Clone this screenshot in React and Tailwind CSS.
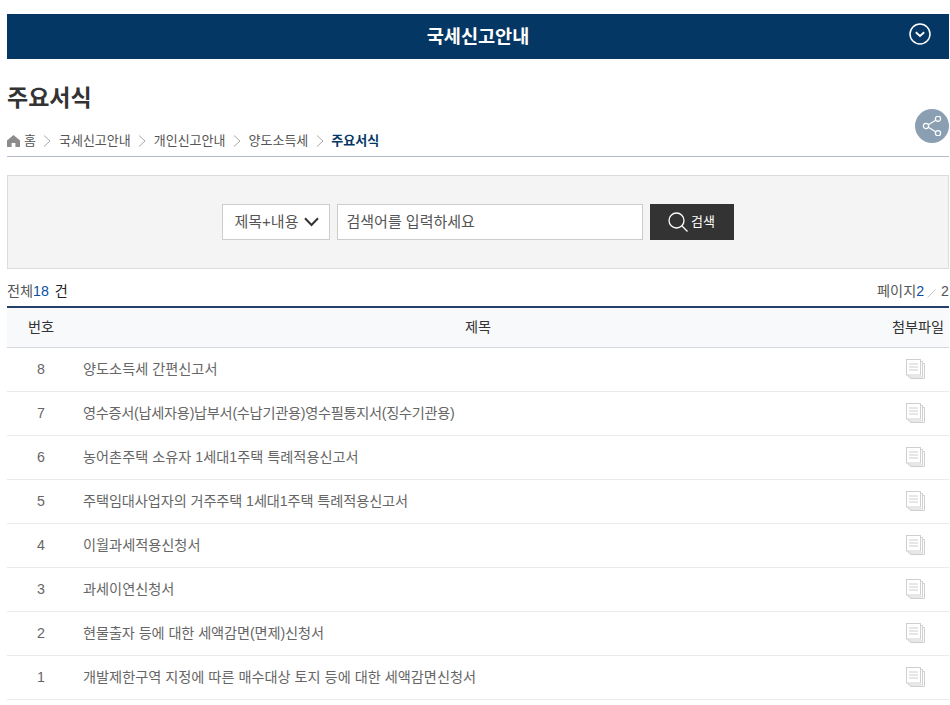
import React from 'react';

const rows = [
  { no: 8, title: '양도소득세 간편신고서' },
  { no: 7, title: '영수증서(납세자용)납부서(수납기관용)영수필통지서(징수기관용)', tight: 'tracking-[-0.28px]' },
  { no: 6, title: '농어촌주택 소유자 1세대1주택 특례적용신고서' },
  { no: 5, title: '주택임대사업자의 거주주택 1세대1주택 특례적용신고서', tight: 'tracking-[-0.1px]' },
  { no: 4, title: '이월과세적용신청서' },
  { no: 3, title: '과세이연신청서' },
  { no: 2, title: '현물출자 등에 대한 세액감면(면제)신청서', tight: 'tracking-[-0.1px]' },
  { no: 1, title: '개발제한구역 지정에 따른 매수대상 토지 등에 대한 세액감면신청서' },
];

const crumbs = ['국세신고안내', '개인신고안내', '양도소득세'];

const Sep = () => (
  <svg width="8" height="12" viewBox="0 0 8 12" fill="none" stroke="#a8a8a8" strokeWidth="1" className="mx-[7.5px] shrink-0">
    <path d="M1 0.5 L7 6 L1 11.5" />
  </svg>
);

const HomeIcon = () => (
  <svg width="13" height="12" viewBox="0 0 13 12" fill="#8c8c8c" className="mr-[4px] shrink-0">
    <path d="M6.5 0 L13 5.6 V12 H8.4 V8 H4.6 V12 H0 V5.6 Z" />
  </svg>
);

const CircleDown = () => (
  <svg width="22" height="22" viewBox="0 0 22 22" fill="none" stroke="#fff">
    <circle cx="11" cy="11" r="10" strokeWidth="1.5" />
    <path d="M6.8 9.3 L11 13 L15.2 9.3" strokeWidth="1.8" />
  </svg>
);

const ShareIcon = () => (
  <svg width="20" height="20" viewBox="0 0 20 20" fill="none" stroke="#fff" strokeWidth="1.2">
    <circle cx="16" cy="2.8" r="2.6" />
    <circle cx="4" cy="10" r="2.6" />
    <circle cx="16" cy="17.2" r="2.6" />
    <path d="M6.3 8.7 L13.7 4.2 M6.3 11.3 L13.7 15.8" />
  </svg>
);

const FileIcon = () => (
  <svg width="19" height="20" viewBox="0 0 19 20" fill="none" stroke="#cfcfcf" strokeWidth="1">
    <path d="M14.5 2.5 H16.5 V18 H2.5 V16" />
    <path d="M16.5 4.5 H18.5 V19.5 H4.5 V18" />
    <rect x="0.5" y="0.5" width="14" height="15.5" fill="#fff" />
    <path d="M3 5 H12 M3 8 H12 M3 11 H12" />
  </svg>
);

const SelectArrow = () => (
  <svg width="15" height="10" viewBox="0 0 15 10" fill="none" stroke="#333" strokeWidth="2">
    <path d="M1 1.2 L7.5 8 L14 1.2" />
  </svg>
);

const SearchIcon = () => (
  <svg width="20" height="20" viewBox="0 0 20 20" fill="none" stroke="#fff" strokeWidth="1.3">
    <circle cx="8.5" cy="8.5" r="7.5" />
    <path d="M14 14 L19.5 19.5" />
  </svg>
);

const Slash = () => (
  <svg width="9" height="10" viewBox="0 0 9 10" fill="none" stroke="#c4c4c4" strokeWidth="1" className="ml-[3px] mr-[5px] mt-[3px]">
    <path d="M0.5 9.5 L8.5 1.5" />
  </svg>
);

const App = () => {
  return (
    <div className="relative min-h-[705px] bg-white pl-[7px] pr-px pt-[14px] text-[14.2px] font-['Liberation_Sans','Noto_Sans_CJK_KR',sans-serif] text-[#666]">
      {/* 상단 타이틀 */}
      <div className="relative flex h-[45px] items-center justify-center bg-[#053764] pt-px">
        <span className="text-[18.6px] font-bold text-white">국세신고안내</span>
        <span className="absolute right-[18px] top-[9px]">
          <CircleDown />
        </span>
      </div>

      <h1 className="mt-[22px] h-[34px] text-[23px] font-bold leading-[34px] text-[#333]">주요서식</h1>

      {/* 경로 */}
      <div className="mt-[15px] flex h-[27px] items-start border-b border-[#b4bac8] pt-[2px] text-[13px] leading-[18px] text-[#555]">
        <div className="flex h-[18px] items-center">
          <HomeIcon />
          <span>홈</span>
          <Sep />
          {crumbs.map((c) => (
            <React.Fragment key={c}>
              <span>{c}</span>
              <Sep />
            </React.Fragment>
          ))}
          <span className="font-bold text-[#053764]">주요서식</span>
        </div>
      </div>

      <button className="absolute right-px top-[109px] flex h-[34px] w-[34px] items-center justify-center rounded-full bg-[#8b9fb3]">
        <ShareIcon />
      </button>

      {/* 검색 */}
      <div className="mt-[18px] flex h-[94px] items-center justify-center gap-[7px] border border-[#dcdcdc] bg-[#f4f4f4] pr-[1px] text-[15px]">
        <div className="flex h-[36px] w-[108px] items-center justify-between border border-[#ccc] bg-white pl-[12px] pr-[10px] text-[#555]">
          <span>제목+내용</span>
          <SelectArrow />
        </div>
        <div className="flex h-[36px] w-[306px] items-center border border-[#ccc] bg-white pl-[9px] text-[#555]">
          검색어를 입력하세요
        </div>
        <button className="flex h-[36px] w-[84px] items-center justify-center gap-[3px] bg-[#333] text-[13px] text-white">
          <SearchIcon />
          <span>검색</span>
        </button>
      </div>

      {/* 건수 */}
      <div className="mt-[11px] flex h-[26px] items-start justify-between leading-[22px] text-[#555]">
        <div>
          전체<span className="text-[#0b50a0]">18</span> <span className="ml-[2px] text-[#222]">건</span>
        </div>
        <div className="flex items-center">
          페이지<span className="text-[#0b50a0]">2</span>
          <Slash />2
        </div>
      </div>

      {/* 목록 */}
      <table className="w-full table-fixed border-t-2 border-[#263f68]">
        <thead>
          <tr className="h-[40px] border-b border-[#d5d8de] bg-[#f8f9fb] text-[#333]">
            <th className="w-[68px] font-normal">번호</th>
            <th className="font-normal">제목</th>
            <th className="w-[68px] pl-[6px] font-normal">첨부파일</th>
          </tr>
        </thead>
        <tbody>
          {rows.map((row) => (
            <tr key={row.no} className="h-[44px] border-b border-[#ebebeb]">
              <td className="pt-[2px] text-center">{row.no}</td>
              <td className={`pl-[8px] pt-[2px] ${row.tight || ''}`}>{row.title}</td>
              <td>
                <div className="flex justify-center pl-px">
                  <FileIcon />
                </div>
              </td>
            </tr>
          ))}
        </tbody>
      </table>
    </div>
  );
};

export default App;
